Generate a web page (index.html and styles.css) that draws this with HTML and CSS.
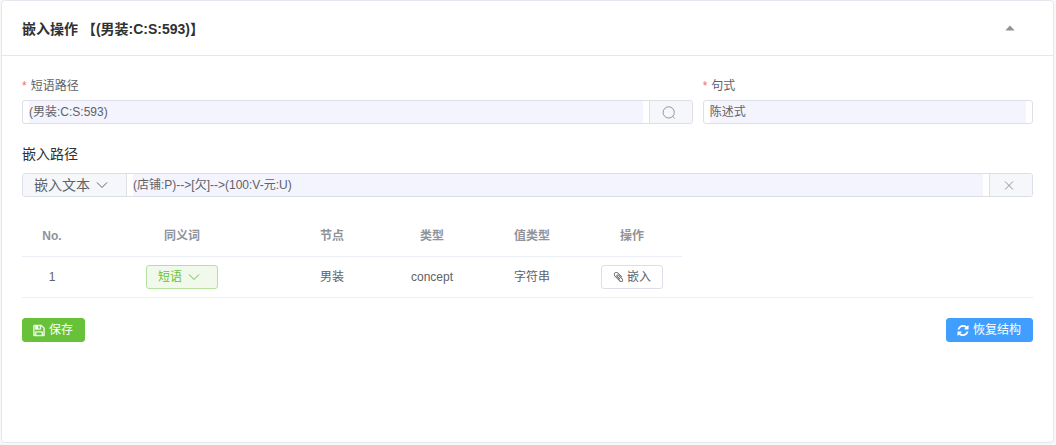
FILE: index.html
```
<!DOCTYPE html>
<html lang="zh-CN">
<head>
    <meta charset="UTF-8">
    <meta name="viewport" content="width=device-width, initial-scale=1.0">
    <title>嵌入操作</title>
    <link rel="stylesheet" href="styles.css">
</head>
<body>
    <div class="card">
        <div class="card-header">
            <h2>嵌入操作 【(男装:C:S:593)】</h2>
            <button type="button" class="collapse" aria-label="收起">
                <svg width="10" height="6" viewBox="0 0 10 6"><path d="M5 0.4L9.7 5.6H0.3z" fill="currentColor"/></svg>
            </button>
        </div>

        <div class="card-body">
            <form>
                <div class="row">
                    <div class="col col-wide">
                        <label class="required" for="phrase">短语路径</label>
                        <div class="input-group">
                            <input type="text" id="phrase" value="(男装:C:S:593)">
                            <button type="button" class="addon append" aria-label="搜索">
                                <svg width="14" height="14" viewBox="0 0 14 14" fill="none" stroke="currentColor"><circle cx="6.7" cy="7.4" r="5.6"/><path d="M10.8 11.5l1.9 1.8"/></svg>
                            </button>
                        </div>
                    </div>
                    <div class="col">
                        <label class="required" for="sentence">句式</label>
                        <div class="input-group">
                            <input type="text" id="sentence" value="陈述式">
                        </div>
                    </div>
                </div>

                <label class="path-title" for="path">嵌入路径</label>
                <div class="input-group">
                    <button type="button" class="addon prepend">
                        嵌入文本
                        <svg width="12" height="8" viewBox="0 0 12 8" fill="none" stroke="currentColor"><path d="M1 1.5l5 5 5-5"/></svg>
                    </button>
                    <input type="text" id="path" value="(店铺:P)--&gt;[欠]--&gt;(100:V-元:U)">
                    <button type="button" class="addon append" aria-label="清除">
                        <svg width="10" height="10" viewBox="0 0 10 10" fill="none" stroke="currentColor"><path d="M1 1.5l8 8M9 1.5l-8 8"/></svg>
                    </button>
                </div>
            </form>

            <div class="table-wrapper">
                <table>
                    <thead>
                        <tr>
                            <th class="col-no">No.</th>
                            <th class="col-synonym">同义词</th>
                            <th>节点</th>
                            <th>类型</th>
                            <th>值类型</th>
                            <th>操作</th>
                        </tr>
                    </thead>
                    <tbody>
                        <tr>
                            <td>1</td>
                            <td>
                                <button type="button" class="btn btn-plain">
                                    短语
                                    <svg width="12" height="8" viewBox="0 0 12 8" fill="none" stroke="currentColor"><path d="M1 1.5l5 5 5-5"/></svg>
                                </button>
                            </td>
                            <td>男装</td>
                            <td>concept</td>
                            <td>字符串</td>
                            <td>
                                <button type="button" class="btn">
                                    <svg width="11" height="12" viewBox="0 0 1408 1792" fill="currentColor"><path d="M1404 1385q0 117-79 196t-196 79q-135 0-235-100l-777-776q-113-115-113-271 0-159 110-270t269-111q158 0 273 113l605 606q10 10 10 22 0 16-30.5 46.5t-46.5 30.5q-13 0-23-10l-606-607q-79-77-181-77-106 0-179 75t-73 181q0 105 76 181l776 777q63 63 145 63 64 0 106-42t42-106q0-82-63-145l-581-581q-26-24-60-24-29 0-48 19t-19 48q0 32 25 59l410 410q10 10 10 22 0 16-31 47t-47 31q-12 0-22-10l-410-410q-63-61-63-149 0-82 57-139t139-57q88 0 149 63l581 581q100 98 100 235z"/></svg>
                                    嵌入
                                </button>
                            </td>
                        </tr>
                    </tbody>
                </table>
            </div>

            <div class="actions">
                <button type="button" class="btn btn-success">
                    <svg width="12" height="13" viewBox="0 0 1536 1792" fill="currentColor" stroke="currentColor" stroke-width="50"><path d="M384 1536h768v-384h-768v384zm896 0h128v-896q0-14-10-38.5t-20-34.5l-281-281q-10-10-34-20t-39-10v416q0 40-28 68t-68 28h-576q-40 0-68-28t-28-68v-416h-128v1280h128v-416q0-40 28-68t68-28h832q40 0 68 28t28 68v416zm-384-928v-320q0-13-9.5-22.5t-22.5-9.5h-192q-13 0-22.5 9.5t-9.5 22.5v320q0 13 9.5 22.5t22.5 9.5h192q13 0 22.5-9.5t9.5-22.5zm640 32v928q0 40-28 68t-68 28h-1344q-40 0-68-28t-28-68v-1344q0-40 28-68t68-28h928q40 0 88 20t76 48l280 280q28 28 48 76t20 88z"/></svg>
                    保存
                </button>
                <button type="button" class="btn btn-primary">
                    <svg width="12" height="13" viewBox="0 0 1536 1792" fill="currentColor"><path d="M1511 1056q0 5-1 7-64 268-268 434.5t-478 166.5q-146 0-282.5-55t-243.5-157l-129 129q-19 19-45 19t-45-19-19-45v-448q0-26 19-45t45-19h448q26 0 45 19t19 45-19 45l-137 137q71 66 161 102t187 36q134 0 250-65t186-179q11-17 53-117 8-23 30-23h192q13 0 22.5 9.5t9.5 22.5zm25-800v448q0 26-19 45t-45 19h-448q-26 0-45-19t-19-45 19-45l138-138q-148-137-349-137-134 0-250 65t-186 179q-11 17-53 117-8 23-30 23h-199q-13 0-22.5-9.5t-9.5-22.5v-7q65-268 270-434.5t480-166.5q146 0 284 55.5t245 156.5l130-129q19-19 45-19t45 19 19 45z"/></svg>
                    恢复结构
                </button>
            </div>
        </div>
    </div>
</body>
</html>
```
FILE: styles.css
```
* {
    box-sizing: border-box;
}

body {
    margin: 0;
    padding: 0 2px 2px 1px;
    min-height: 100vh;
    display: flex;
    background-color: #f8f8f9;
    color: #303133;
    font-family: "Liberation Sans", "Noto Sans CJK SC", sans-serif;
    font-size: 12px;
    line-height: 20px;
}

button,
input {
    font-family: inherit;
    font-size: 12px;
    line-height: 20px;
}

svg {
    display: block;
    flex-shrink: 0;
}

.card {
    flex: 1;
    background: #fff;
    border: 1px solid #e4e7ed;
    border-radius: 4px;
}

.card-header {
    display: flex;
    justify-content: space-between;
    align-items: center;
    height: 55px;
    padding: 0 38px 0 20px;
    border-bottom: 1px solid #e4e7ed;
}

h2 {
    margin: 0;
    padding-top: 2px;
    font-size: 14px;
}

.collapse {
    padding: 0;
    border: none;
    background: none;
    color: #909399;
    cursor: pointer;
}

.card-body {
    padding: 20px;
}

.row {
    display: flex;
    margin: 0 -5px 20px;
}

.col {
    width: calc(100% / 3);
    padding: 0 5px;
}

.col-wide {
    width: calc(200% / 3);
}

label {
    display: block;
    height: 24px;
    color: #606266;
}

.required::before {
    content: "*";
    margin-right: 4px;
    color: #f56c6c;
}

.path-title {
    height: 29px;
    font-size: 14px;
    color: #303133;
}

.input-group {
    display: flex;
    height: 24px;
    border: 1px solid #dcdfe6;
    border-radius: 3px;
    overflow: hidden;
}

.input-group input {
    flex: 1;
    min-width: 0;
    margin: 0 6px;
    padding: 0;
    border: none;
    outline: none;
    background: #f4f4ff;
    color: #606266;
}

.addon {
    display: flex;
    justify-content: center;
    align-items: center;
    gap: 6px;
    padding: 0;
    border: 0 solid #dcdfe6;
    background: #f5f7fa;
    color: #909399;
    cursor: pointer;
}

.append {
    width: 43px;
    padding-right: 4px;
    border-left-width: 1px;
}

.prepend {
    width: 104px;
    padding-right: 7px;
    border-right-width: 1px;
    font-size: 14px;
    color: #606266;
}

.table-wrapper {
    margin-top: 19px;
    border-bottom: 1px solid #ebeef5;
}

table {
    width: 660px;
    table-layout: fixed;
    border-collapse: separate;
    border-spacing: 0;
    text-align: center;
}

th,
td {
    width: 100px;
    height: 40px;
    padding: 0;
    color: #606266;
}

th {
    height: 41px;
    border-bottom: 1px solid #ebeef5;
    color: #909399;
}

.col-no {
    width: 60px;
}

.col-synonym {
    width: 200px;
}

.btn {
    display: inline-flex;
    justify-content: center;
    align-items: center;
    gap: 3px;
    height: 24px;
    padding: 0 11px;
    border: 1px solid #dcdfe6;
    border-radius: 3px;
    background: #fff;
    color: #606266;
    vertical-align: middle;
    cursor: pointer;
}

.btn-plain {
    gap: 6px;
    padding-right: 17px;
    border-color: #b3e19d;
    background: #f0f9eb;
    color: #67c23a;
}

.btn-success,
.btn-primary {
    padding: 0 11px 0 10px;
    gap: 4px;
    color: #fff;
}

.btn-success {
    border-color: #67c23a;
    background: #67c23a;
}

.btn-primary {
    border-color: #409eff;
    background: #409eff;
}

.actions {
    display: flex;
    justify-content: space-between;
    margin-top: 20px;
}
```
